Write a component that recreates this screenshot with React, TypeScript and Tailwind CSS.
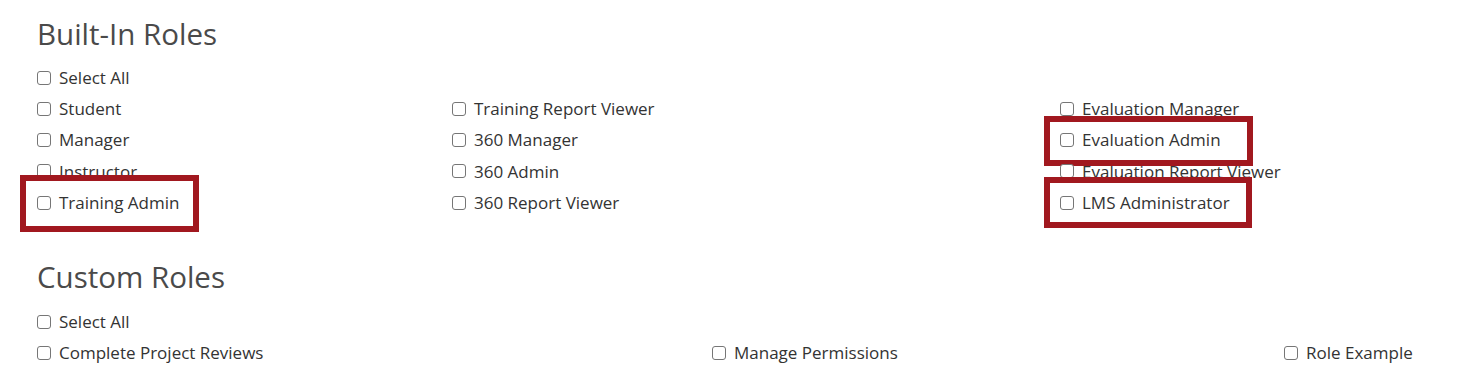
import React from "react";

type Item = { label: string; box?: { left: number; top: number; w: number; h: number } };

function Check({ item }: { item: Item }) {
  return (
    <label className="relative flex h-[31.25px] items-center">
      <span className="box-border block h-[14px] w-[14px] shrink-0 rounded-[3px] border border-[#767676] bg-white" />
      <span className="ml-[8px] whitespace-nowrap text-[17px] text-[#333333]">{item.label}</span>
      {item.box && (
        <span
          className="pointer-events-none absolute block border-[6px] border-[#a1181f]"
          style={{ left: item.box.left, top: item.box.top, width: item.box.w, height: item.box.h }}
        />
      )}
    </label>
  );
}

function Column({ items }: { items: Item[] }) {
  return (
    <div className="flex flex-col">
      {items.map((it) => (
        <Check key={it.label} item={it} />
      ))}
    </div>
  );
}

export default function App() {
  const font = { fontFamily: '"Open Sans", "Liberation Sans", sans-serif' };
  return (
    <div className="h-[376px] w-[1459px] overflow-hidden bg-white pl-[37px] pt-[14px]" style={font}>
      <h2 className="h-[40px] text-[29.5px] leading-[40px] text-[#4a4a4a]">Built-In Roles</h2>
      <div className="mt-[8px]">
        <Check item={{ label: "Select All" }} />
        <div className="grid grid-cols-[415px_608px_1fr]">
          <Column
            items={[
              { label: "Student" },
              { label: "Manager" },
              { label: "Instructor" },
              { label: "Training Admin", box: { left: -17, top: -12, w: 179, h: 57 } },
            ]}
          />
          <Column
            items={[
              { label: "Training Report Viewer" },
              { label: "360 Manager" },
              { label: "360 Admin" },
              { label: "360 Report Viewer" },
            ]}
          />
          <Column
            items={[
              { label: "Evaluation Manager" },
              { label: "Evaluation Admin", box: { left: -16, top: -9, w: 209, h: 50 } },
              { label: "Evaluation Report Viewer" },
              { label: "LMS Administrator", box: { left: -16, top: -10, w: 208, h: 51 } },
            ]}
          />
        </div>
      </div>
      <h2 className="mt-[39px] h-[40px] text-[29.5px] leading-[40px] text-[#4a4a4a]">Custom Roles</h2>
      <div className="mt-[9px]">
        <Check item={{ label: "Select All" }} />
        <div className="grid grid-cols-[675px_572px_1fr]">
          <Column items={[{ label: "Complete Project Reviews" }]} />
          <Column items={[{ label: "Manage Permissions" }]} />
          <Column items={[{ label: "Role Example" }]} />
        </div>
      </div>
    </div>
  );
}
